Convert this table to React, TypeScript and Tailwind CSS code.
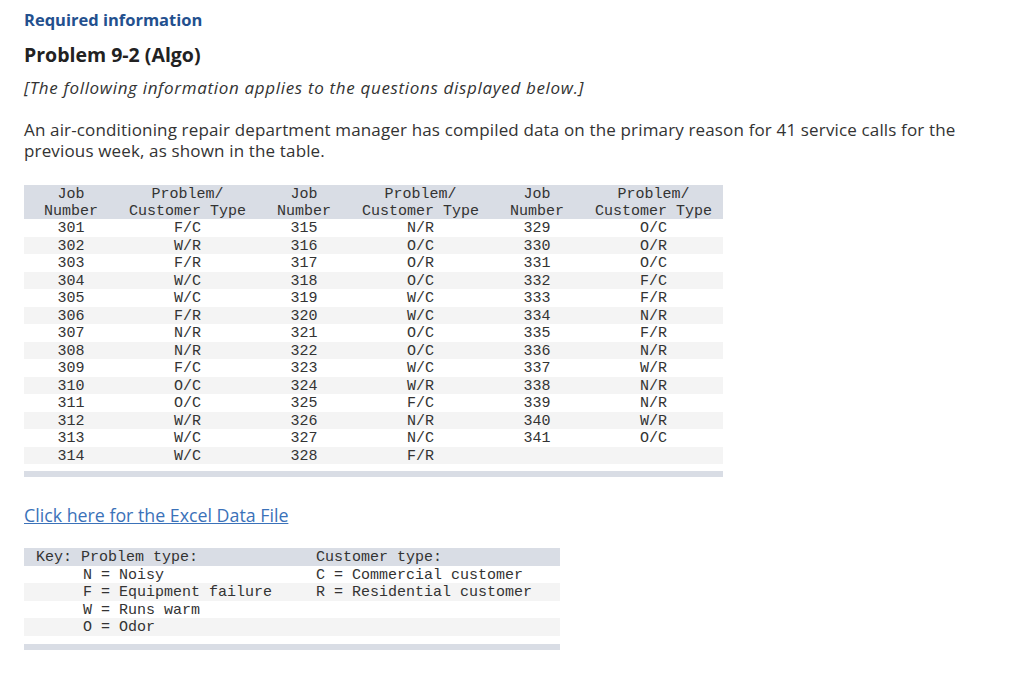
import React from "react";

const rows: [string, string, string, string, string, string][] = [
  ["301", "F/C", "315", "N/R", "329", "O/C"],
  ["302", "W/R", "316", "O/C", "330", "O/R"],
  ["303", "F/R", "317", "O/R", "331", "O/C"],
  ["304", "W/C", "318", "O/C", "332", "F/C"],
  ["305", "W/C", "319", "W/C", "333", "F/R"],
  ["306", "F/R", "320", "W/C", "334", "N/R"],
  ["307", "N/R", "321", "O/C", "335", "F/R"],
  ["308", "N/R", "322", "O/C", "336", "N/R"],
  ["309", "F/C", "323", "W/C", "337", "W/R"],
  ["310", "O/C", "324", "W/R", "338", "N/R"],
  ["311", "O/C", "325", "F/C", "339", "N/R"],
  ["312", "W/R", "326", "N/R", "340", "W/R"],
  ["313", "W/C", "327", "N/C", "341", "O/C"],
  ["314", "W/C", "328", "F/R", "", ""],
];

const cols = "grid grid-cols-[94px_139px_94px_139px_94px_139px]";
const sans = { fontFamily: "'Open Sans', Lato, sans-serif" };
const mono = { fontFamily: "'Liberation Mono', 'Courier New', monospace" };

export default function App() {
  return (
    <div className="w-[1024px] h-[682px] bg-white pl-[24px] pt-[10px]" style={sans}>
      <div className="text-[16.5px] leading-[20px] font-bold text-[#23508e]">Required information</div>
      <div className="mt-[13px] text-[19.5px] leading-[24px] font-bold text-[#222]">Problem 9-2 (Algo)</div>
      <div className="mt-[11px] text-[17px] leading-[20px] italic tracking-[0.67px] text-[#333]">
        [The following information applies to the questions displayed below.]
      </div>
      <p className="mt-[21px] w-[950px] text-[17px] leading-[21px] tracking-[0.15px] text-[#333]">
        An air-conditioning repair department manager has compiled data on the primary reason for 41 service calls for the
        previous week, as shown in the table.
      </p>

      <div className="mt-[24px] w-[699px] text-[15px] text-[#333]" style={mono}>
        <div className={`${cols} bg-[#d9dde5] h-[34px] pt-[1px] leading-[17px] text-center`}>
          {[0, 1, 2].map((i) => (
            <React.Fragment key={i}>
              <div>Job<br />Number</div>
              <div>Problem/<br />Customer Type</div>
            </React.Fragment>
          ))}
        </div>
        {rows.map((r, idx) => (
          <div
            key={idx}
            className={`${cols} h-[17.5px] pt-[1px] leading-[17.5px] text-center ${idx % 2 === 1 ? "bg-[#f4f4f4]" : "bg-white"}`}
          >
            {r.map((c, j) => (
              <div key={j}>{c}</div>
            ))}
          </div>
        ))}
        <div className="mt-[7px] h-[6px] bg-[#d9dde5]" />
      </div>

      <a href="#" className="block mt-[28px] w-max text-[17.8px] leading-[20px] text-[#3b72b9] underline">
        Click here for the Excel Data File
      </a>

      <div className="mt-[23px] w-[536px] text-[15px] text-[#333]" style={mono}>
        <div className="grid grid-cols-[292px_244px] bg-[#d9dde5] h-[17.5px] pt-[1px] leading-[17.5px]">
          <div className="pl-[12px] whitespace-pre">Key: Problem type:</div>
          <div className="whitespace-pre">Customer type:</div>
        </div>
        {[
          ["N = Noisy", "C = Commercial customer"],
          ["F = Equipment failure", "R = Residential customer"],
          ["W = Runs warm", ""],
          ["O = Odor", ""],
        ].map((r, i) => (
          <div
            key={i}
            className={`grid grid-cols-[292px_244px] h-[17.5px] pt-[1px] leading-[17.5px] ${i % 2 === 1 ? "bg-[#f4f4f4]" : "bg-white"}`}
          >
            <div className="pl-[59px] whitespace-pre">{r[0]}</div>
            <div className="whitespace-pre">{r[1]}</div>
          </div>
        ))}
        <div className="mt-[8px] h-[6px] bg-[#d9dde5]" />
      </div>
    </div>
  );
}
